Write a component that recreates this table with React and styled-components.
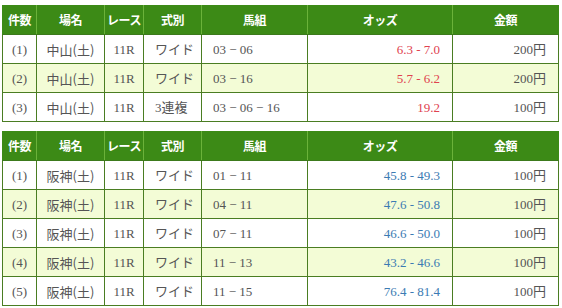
import React from "react";
import styled, { createGlobalStyle } from "styled-components";

const Global = createGlobalStyle`
  html, body { margin: 0; padding: 0; background: #fff; }
  body { font-family: "Liberation Serif", "Noto Sans CJK JP", serif; }
`;

const Page = styled.div`
  padding: 5px 4px 0 2px;
  display: flex;
  flex-direction: column;
  gap: 9px;
`;

const Table = styled.table`
  width: 556px;
  border-collapse: collapse;
  table-layout: fixed;
  font-size: 13px;
  line-height: 1;
  color: #555;
`;

const Col = styled.col`
  width: ${(p) => p.$w}px;
`;

const Th = styled.th`
  background: #3c8a16;
  color: #fff;
  height: 29px;
  padding: 0;
  font-family: "Noto Sans CJK JP", sans-serif;
  font-weight: 700;
  font-size: 12px;
  letter-spacing: -0.5px;
  line-height: 1;
  white-space: nowrap;
  text-align: center;
  border-left: 1px solid #6bb23a;
  border-right: 1px solid #6bb23a;
  border-bottom: 1px solid #3c7a1c;
  &:first-child { border-left-color: #3c8a16; }
  &:last-child { border-right-color: #3c8a16; }
`;

const Tr = styled.tr`
  background: ${(p) => (p.$alt ? "#f3fcd6" : "#fff")};
`;

const Td = styled.td`
  height: 28px;
  padding: 0;
  padding-left: ${(p) => (p.$align === "left" ? "11px" : "0")};
  padding-right: ${(p) => (p.$align === "right" ? "12px" : "0")};
  border: 1px solid #4a7d22;
  text-align: ${(p) => p.$align || "center"};
  color: ${(p) => p.$color || "#555"};
  font-family: ${(p) =>
    p.$gothic ? `"Noto Sans CJK JP", sans-serif` : `"Liberation Serif", "Noto Sans CJK JP", serif`};
  font-size: ${(p) => (p.$gothic ? "13px" : "13px")};
  white-space: nowrap;
  overflow: hidden;
`;

const widths = [34, 68, 39, 58, 106, 145, 106];
const heads = ["件数", "場名", "レース", "式別", "馬組", "オッズ", "金額"];

const RED = "#e0424f";
const BLUE = "#3b7bb3";

const data1 = [
  ["(1)", "中山(土)", "11R", "ワイド", "03 − 06", "6.3 - 7.0", "200円"],
  ["(2)", "中山(土)", "11R", "ワイド", "03 − 16", "5.7 - 6.2", "200円"],
  ["(3)", "中山(土)", "11R", "3連複", "03 − 06 − 16", "19.2", "100円"],
];

const data2 = [
  ["(1)", "阪神(土)", "11R", "ワイド", "01 − 11", "45.8 - 49.3", "100円"],
  ["(2)", "阪神(土)", "11R", "ワイド", "04 − 11", "47.6 - 50.8", "100円"],
  ["(3)", "阪神(土)", "11R", "ワイド", "07 − 11", "46.6 - 50.0", "100円"],
  ["(4)", "阪神(土)", "11R", "ワイド", "11 − 13", "43.2 - 46.6", "100円"],
  ["(5)", "阪神(土)", "11R", "ワイド", "11 − 15", "76.4 - 81.4", "100円"],
];

const aligns = ["center", "center", "center", "left", "left", "right", "right"];

function Result({ rows, oddsColor }) {
  return (
    <Table>
      <colgroup>
        {widths.map((w, i) => (
          <Col key={i} $w={w} />
        ))}
      </colgroup>
      <thead>
        <tr>
          {heads.map((h) => (
            <Th key={h}>{h}</Th>
          ))}
        </tr>
      </thead>
      <tbody>
        {rows.map((r, i) => (
          <Tr key={i} $alt={i % 2 === 1}>
            {r.map((c, j) => (
              <Td
                key={j}
                $align={aligns[j]}
                $gothic={j === 1}
                $color={j === 5 ? oddsColor : undefined}
              >
                {c}
              </Td>
            ))}
          </Tr>
        ))}
      </tbody>
    </Table>
  );
}

export default function App() {
  return (
    <>
      <Global />
      <Page>
        <Result rows={data1} oddsColor={RED} />
        <Result rows={data2} oddsColor={BLUE} />
      </Page>
    </>
  );
}
